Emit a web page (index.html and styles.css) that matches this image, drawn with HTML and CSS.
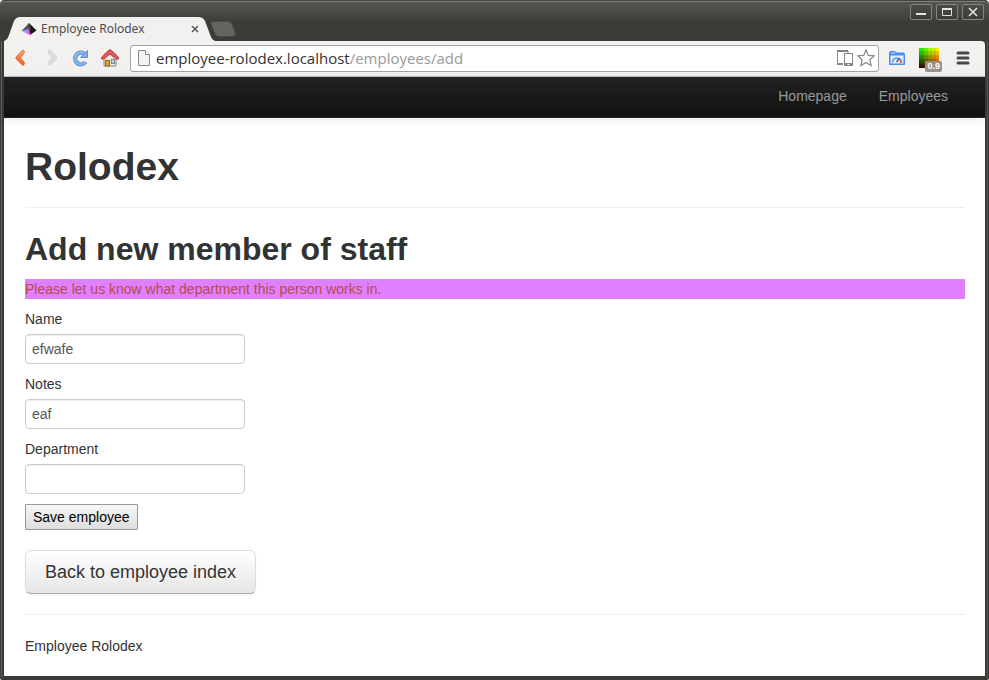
FILE: index.html
```html
<!DOCTYPE html>
<html lang="en">
<head>
<meta charset="utf-8">
<title>Employee Rolodex</title>
<link rel="stylesheet" href="styles.css">
</head>
<body>
<div class="window">
  <header class="titlebar">
    <div class="tab">
      <svg class="tab-shape" viewBox="0 0 212 24" preserveAspectRatio="none" aria-hidden="true"><path d="M0 24C3 23 4 21 5 18L10 4Q12 0 16 0H194Q199 0 201 4L207 20Q209 24 212 24Z" fill="#f2f1f0"/></svg>
      <svg class="favicon" width="16" height="16" viewBox="0 0 16 16" aria-hidden="true">
        <defs><linearGradient id="prism" x1="0" x2="1"><stop offset="0" stop-color="#30e0f0"/><stop offset=".5" stop-color="#c080ff"/><stop offset="1" stop-color="#ff30e0"/></linearGradient></defs>
        <path d="M8 2L.5 10L8 9Z" fill="#555"/><path d="M8 2L15.500 9.500L9 14L7 9Z" fill="#151515"/><path d="M8 2L10 9L7 8.500Z" fill="#555"/><path d="M.5 10L8 8L10 14.500Z" fill="url(#prism)"/>
      </svg>
      <span class="tab-title">Employee Rolodex</span>
      <button class="tab-close" type="button" aria-label="Close tab"><svg width="8" height="8" viewBox="0 0 8 8"><path d="M1 1L7 7M7 1L1 7" stroke="#5a5a5a" stroke-width="1.6"/></svg></button>
    </div>
    <button class="new-tab" type="button" aria-label="New tab"><svg width="27" height="16" viewBox="0 0 27 16"><path d="M3 .5H18Q21 .5 22 3L25.500 13Q26 15.500 23 15.500H9Q6 15.500 5 13L1 3Q.5 .5 3 .5Z" fill="#66645f" stroke="#4a4944"/></svg></button>
    <div class="controls">
      <button type="button" aria-label="Minimize"><svg width="20" height="14" viewBox="0 0 20 14"><path d="M5 9H15" stroke="#e5e3dd" stroke-width="2"/></svg></button>
      <button type="button" aria-label="Maximize"><svg width="20" height="14" viewBox="0 0 20 14"><path d="M5.500 4V10.500H14.500V4" fill="none" stroke="#e5e3dd"/><path d="M5 4H15" stroke="#e5e3dd" stroke-width="2"/></svg></button>
      <button type="button" aria-label="Close"><svg width="20" height="14" viewBox="0 0 20 14"><path d="M6 3L14 11M14 3L6 11" stroke="#e5e3dd" stroke-width="1.600"/></svg></button>
    </div>
  </header>

  <div class="toolbar">
    <button class="tool" type="button" aria-label="Back"><svg width="20" height="20" viewBox="0 0 20 20"><defs><linearGradient id="back" x1="0" x2="0" y1="0" y2="1"><stop offset="0" stop-color="#f9a56c"/><stop offset="1" stop-color="#ee5a20"/></linearGradient></defs><path d="M11.500 2.200Q12.500 1.800 13 3L13.500 4.500L9.500 10L13.500 14.500L13.200 16.500Q12.500 17.800 11.200 17L5 10.800V9Z" fill="url(#back)" stroke="#dc6a30" stroke-width=".8"/></svg></button>
    <button class="tool" type="button" aria-label="Forward"><svg width="20" height="20" viewBox="0 0 20 20"><path d="M9 2.200Q8 1.800 7.500 3L7 4.500L11 10L7 14.500L7.300 16.500Q8 17.800 9.300 17L15.500 10.800V9Z" fill="#dedddb" stroke="#d0cfcd" stroke-width=".8"/></svg></button>
    <button class="tool" type="button" aria-label="Reload"><svg width="20" height="20" viewBox="0 0 20 20"><path d="M13 5.500A5.800 5.800 0 1 0 14.500 14" fill="none" stroke="#5a92ce" stroke-width="4.400"/><path d="M16.500 2.500V9.500H9.500Z" fill="#86b6e8" stroke="#5a92ce"/><path d="M13 5.500A5.800 5.800 0 1 0 14 14.300" fill="none" stroke="#86b6e8" stroke-width="2.800"/></svg></button>
    <button class="tool" type="button" aria-label="Home"><svg width="20" height="20" viewBox="0 0 20 20"><path d="M3 9L9 4L15 9V18H3Z" fill="#eeeae0" stroke="#8e8c86"/><rect x="4.500" y="12.500" width="4" height="5.500" fill="#e0a030" stroke="#9a6a1a"/><rect x="10.500" y="11.500" width="3" height="4" fill="#c0d0dc" stroke="#7c8890"/><path d="M9 1.500Q5 4 .5 9.500V11H3L9 6L15 11H17.500V9.500Q13 4 9 1.500Z" fill="#e05a5c" stroke="#b83c40"/></svg></button>
    <div class="omnibox">
      <svg width="12" height="16" viewBox="0 0 12 16" aria-hidden="true"><path d="M.5.5H7.500L11.500 4.500V15.500H.5Z" fill="#f2f2f2" stroke="#8b8b8b"/><path d="M7.500.5V4.500H11.500" fill="#fff" stroke="#8b8b8b"/></svg>
      <div class="url">employee-rolodex.localhost<span>/employees/add</span></div>
      <svg width="18" height="18" viewBox="0 0 18 18" aria-hidden="true"><path d="M7 15.500H1.500V2H12V4" fill="none" stroke="#858585"/><path d="M1 2H12M1 15H7" stroke="#858585" stroke-width="2"/><rect x="8.500" y="4.500" width="8" height="12" fill="#fff" stroke="#858585"/><path d="M8 15.500H11.500M13.500 15.500H17M8 14.500H17" stroke="#858585"/></svg>
      <svg width="18" height="18" viewBox="0 0 18 18" aria-hidden="true"><path d="M9 1L11.300 6.400L17.200 6.900L12.800 10.800L14.100 16.600L9 13.500L3.900 16.600L5.200 10.800L.8 6.900L6.700 6.400Z" fill="#fff" stroke="#858585" stroke-width="1.200"/></svg>
    </div>
    <button class="ext" type="button" aria-label="Page speed"><svg width="16" height="16" viewBox="0 0 16 16"><path d="M.5 2.500Q.5 1.500 1.500 1.500H6L7.500 3H14.500Q15.500 3 15.500 4V14.500H.5Z" fill="#4d8df0" stroke="#4d8df0"/><path d="M2 3H6" stroke="#cfe0fb"/><rect x="1.500" y="5.500" width="13" height="8" fill="#e3edfc"/><path d="M3.500 12.500A4.500 4.500 0 0 1 12.500 12.500" fill="none" stroke="#4d8df0" stroke-width="1.600"/><path d="M7.500 12L10.500 8.500" stroke="#555" stroke-width="1.400"/><path d="M11.500 10V13" stroke="#e05050"/></svg></button>
    <button class="ext ext-color" type="button" aria-label="Colour grid">
      <svg width="20" height="20" viewBox="0 0 20 20"><defs><linearGradient id="hue" x1="0" x2="1"><stop offset="0" stop-color="#0e0"/><stop offset=".6" stop-color="#bf0"/><stop offset="1" stop-color="#fe0"/></linearGradient><linearGradient id="low" x1="0" x2="1"><stop offset="0" stop-color="#100"/><stop offset="1" stop-color="#e00"/></linearGradient><linearGradient id="fade" x1="0" x2="0" y1="0" y2="1"><stop offset=".1" stop-color="#000"/><stop offset="1" stop-color="#fff"/></linearGradient><mask id="m"><rect width="20" height="20" fill="url(#fade)"/></mask></defs><rect width="20" height="20" fill="url(#hue)"/><rect width="20" height="20" fill="url(#low)" mask="url(#m)"/><path d="M4 0V20M8 0V20M12 0V20M16 0V20M0 4H20M0 8H20M0 12H20M0 16H20" stroke="#000" stroke-opacity=".12"/></svg>
      <span class="badge">0.9</span>
    </button>
    <button class="ext" type="button" aria-label="Menu"><svg width="14" height="14" viewBox="0 0 14 14"><path d="M2 2H12M2 7H12M2 12H12" stroke="#484848" stroke-width="3" stroke-linecap="round"/></svg></button>
  </div>

  <div class="page">
    <nav class="navbar"><a href="#">Homepage</a><a href="#">Employees</a></nav>
    <main class="container">
      <h1>Rolodex</h1>
      <hr>
      <h2>Add new member of staff</h2>
      <form>
        <div class="error">Please let us know what department this person works in.</div>
        <label for="name">Name</label>
        <input id="name" type="text" value="efwafe">
        <label for="notes">Notes</label>
        <input id="notes" type="text" value="eaf">
        <label for="department">Department</label>
        <input id="department" type="text">
        <button class="save" type="button">Save employee</button>
      </form>
      <a class="btn" href="#">Back to employee index</a>
      <hr>
      <footer>Employee Rolodex</footer>
    </main>
  </div>
</div>
</body>
</html>
```
FILE: styles.css
```css
* { box-sizing: border-box; }
html, body { height: 100%; }
body { margin: 0; background: #fff; font: 14px/20px "Liberation Sans", Arial, sans-serif; color: #333; }
svg { display: block; flex: none; }
button { font: inherit; padding: 0; border: 0; background: none; }

.window {
  min-height: 100%;
  display: flex;
  flex-direction: column;
  padding: 0 4px 4px;
  background: #3c3b37;
  border-radius: 5px 5px 3px 3px;
  box-shadow: inset 0 0 0 1px #3c3b37, inset 2px 0 #62615c, inset -2px 0 #55544f;
}
.titlebar {
  height: 41px;
  margin: 0 -4px;
  padding: 0 4px;
  display: flex;
  align-items: flex-end;
  border-radius: 5px 5px 0 0;
  border-top: 1px solid #45443f;
  box-shadow: inset 0 1px #7d7c76;
  background: linear-gradient(#57564f, #3c3b37 22px);
}
.tab {
  position: relative;
  width: 212px;
  height: 24px;
  display: flex;
  align-items: center;
  gap: 4px;
  padding: 0 13px 0 17px;
}
.tab-shape { position: absolute; inset: 0; width: 100%; height: 100%; }
.favicon, .tab-title, .tab-close { position: relative; }
.tab-title { flex: 1; font: 12px/16px "Noto Sans", sans-serif; color: #4c4c4c; white-space: nowrap; }
.tab-close { padding: 0 4px; }
.new-tab { margin: 0 0 4px -6px; }
.controls { margin-left: auto; align-self: flex-start; display: flex; gap: 4px; padding: 3px 1px 0 0; }
.controls button {
  width: 22px;
  height: 16px;
  border: 1px solid #85847d;
  border-radius: 2px;
  background: linear-gradient(#4c4b46, #3c3b37);
}

.toolbar {
  height: 36px;
  display: flex;
  align-items: center;
  padding: 0 13px 1px 7px;
  background: #f2f1f0;
  border-bottom: 1px solid #c4c2c0;
  border-radius: 0 4px 0 0;
}
.tool { margin-right: 10px; }
.omnibox {
  flex: 1;
  min-width: 0;
  height: 27px;
  margin: 0 10px 0 -1px;
  padding: 0 3px 0 7px;
  display: flex;
  align-items: center;
  gap: 3px;
  background: #fff;
  border: 1px solid #a5a3a1;
  border-radius: 3px;
}
.url { flex: 1; padding-left: 3px; font: 15px/20px "Open Sans", sans-serif; color: #333; white-space: nowrap; }
.url span { color: #999; }
.ext { margin-right: 14px; }
.ext:last-child { margin-right: 2px; }
.ext-color { position: relative; margin-right: 17px; }
.badge {
  position: absolute;
  right: -3px;
  bottom: -4px;
  padding: 1px 2px;
  font: bold 9px/9px "Liberation Sans", sans-serif;
  color: #fff;
  background: #99908c;
  border-radius: 2px;
}

.page { flex: 1; background: #fff; }
.navbar {
  height: 41px;
  display: flex;
  justify-content: flex-end;
  gap: 32px;
  padding: 9px 37px;
  background: linear-gradient(#222, #111);
  border-bottom: 1px solid #252525;
  box-shadow: 0 1px 10px rgba(0, 0, 0, .1);
}
.navbar a { color: #999; text-decoration: none; }
.container { padding: 29px 20px 20px 21px; }
h1, h2 { margin: 0; line-height: 40px; color: #333; }
h1 { font-size: 39px; }
h2 { font-size: 32px; }
hr { margin: 20px 0; border: 0; border-top: 1px solid #eee; border-bottom: 1px solid #fff; }
form { margin: 10px 0 20px; }
.error { margin-bottom: 10px; color: #b94a48; background: #df80ff; }
label { display: block; margin-bottom: 5px; }
input {
  display: block;
  width: 220px;
  height: 30px;
  margin-bottom: 10px;
  padding: 4px 6px;
  font: inherit;
  color: #555;
  background: #fff;
  border: 1px solid #ccc;
  border-radius: 4px;
  box-shadow: inset 0 1px 1px rgba(0, 0, 0, .075);
}
.save {
  display: block;
  padding: 2px 7px;
  color: #000;
  background: linear-gradient(#f6f6f6, #dedede);
  border: 1px solid #999;
  border-radius: 1px;
}
.btn {
  display: inline-block;
  padding: 11px 19px;
  font-size: 18px;
  line-height: 20px;
  color: #333;
  text-decoration: none;
  text-shadow: 0 1px 1px rgba(255, 255, 255, .75);
  background: linear-gradient(#fff, #e6e6e6);
  border: 1px solid #ddd;
  border-bottom-color: #aaa;
  border-radius: 6px;
  box-shadow: 0 1px 2px rgba(0, 0, 0, .05);
}
```
